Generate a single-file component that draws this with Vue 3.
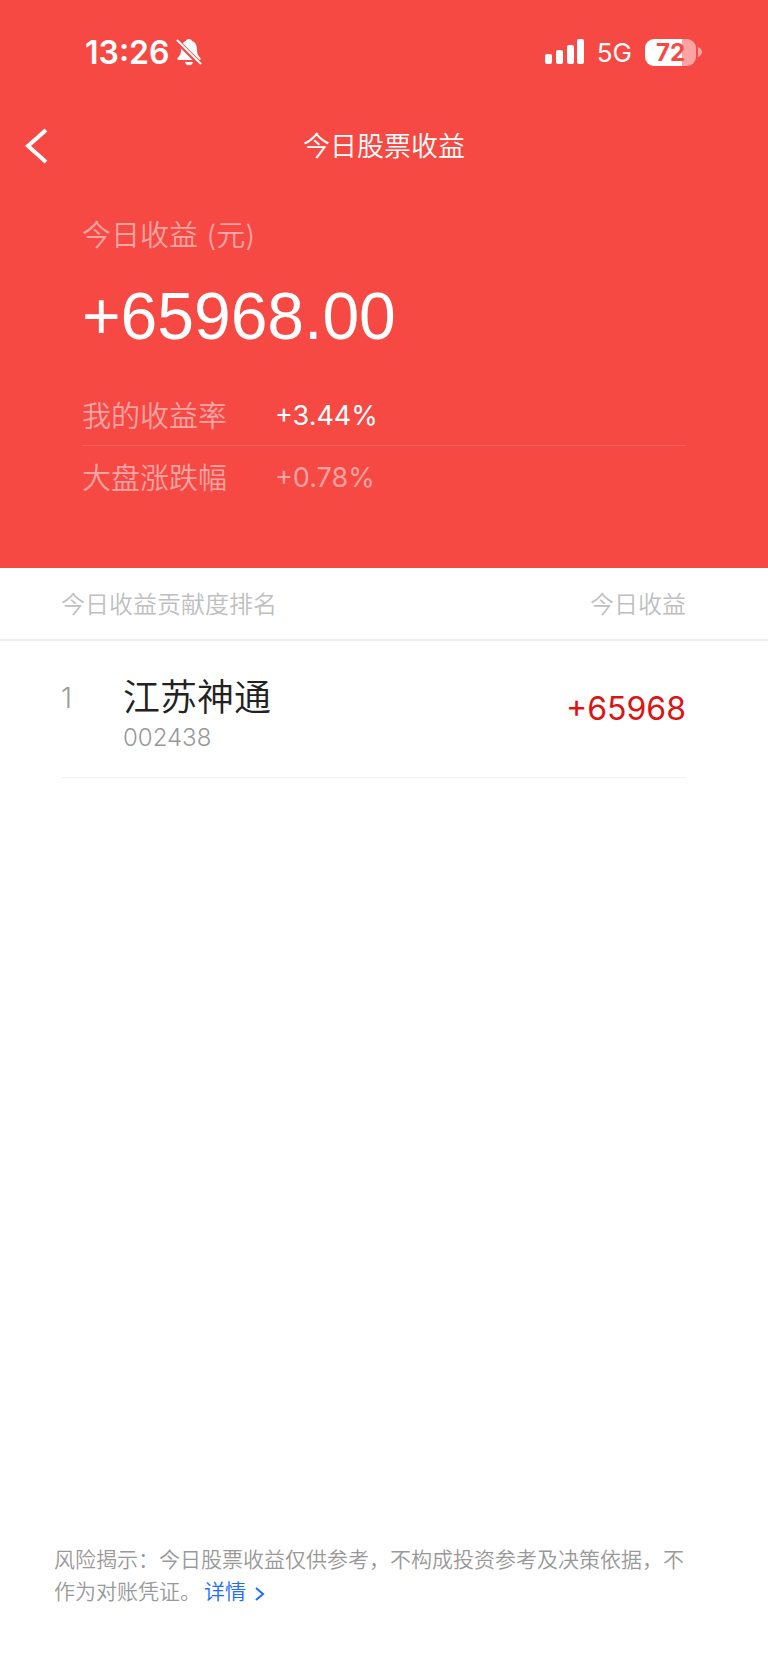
<template>
  <div class="page">
    <header class="summary">
      <div class="status-bar">
        <div class="status-left">
          <span class="time">13:26</span>
          <svg class="bell" viewBox="0 0 26 28" aria-hidden="true">
            <path
              d="M13 1c-1.700 0-2.600.8-3 2C6 4.300 5 8 5 12c0 4-1 5.500-3 7.500-1.200 1.200-.8 2.500.8 2.500h20.400c1.600 0 2-1.300.8-2.500-2-2-3-3.500-3-7.500 0-4-1-7.700-5-9-.4-1.200-1.300-2-3-2z"
            />
            <path d="M9 24h8c-.3 2-1.900 3.300-4 3.300S9.300 26 9 24z" />
            <path class="bell-gap" d="M0 2l25 25" />
            <path class="bell-slash" d="M1.500 2.500l23 23" />
          </svg>
        </div>
        <div class="status-right">
          <svg class="signal" viewBox="0 0 40 26" aria-hidden="true">
            <rect x="0" y="15" width="7" height="10" rx="2" />
            <rect x="11" y="11" width="7" height="14" rx="2" />
            <rect x="22" y="6" width="7" height="19" rx="2" />
            <rect x="32" y="0" width="7" height="25" rx="2" />
          </svg>
          <span class="network">5G</span>
          <div class="battery">
            <span class="battery-body">{{ battery }}</span>
            <svg class="battery-tip" viewBox="0 0 4 10" aria-hidden="true">
              <path d="M0 0c2.500 1 4 2.800 4 5s-1.500 4-4 5z" />
            </svg>
          </div>
        </div>
      </div>

      <nav class="nav-bar">
        <button class="back" type="button" aria-label="返回">
          <svg viewBox="0 0 24 36" aria-hidden="true">
            <path d="M21 2L3 18l18 16" />
          </svg>
        </button>
        <h1>今日股票收益</h1>
      </nav>

      <section class="profit">
        <p class="profit-label">今日收益 (元)</p>
        <p class="profit-total">+65968.00</p>
        <dl class="rates">
          <div v-for="rate in rates" :key="rate.label" class="rate">
            <dt>{{ rate.label }}</dt>
            <dd :class="{ muted: rate.muted }">{{ rate.value }}</dd>
          </div>
        </dl>
      </section>
    </header>

    <main>
      <table class="ranking">
        <thead>
          <tr>
            <th colspan="2" scope="col">今日收益贡献度排名</th>
            <th class="right" scope="col">今日收益</th>
          </tr>
        </thead>
        <tbody>
          <tr v-for="(stock, index) in stocks" :key="stock.code">
            <td class="rank"><div class="cell">{{ index + 1 }}</div></td>
            <td>
              <div class="cell">
                <div class="name">{{ stock.name }}</div>
                <div class="code">{{ stock.code }}</div>
              </div>
            </td>
            <td class="right"><div class="cell gain">{{ stock.gain }}</div></td>
          </tr>
        </tbody>
      </table>
    </main>

    <footer class="notice">
      风险揭示：今日股票收益仅供参考，不构成投资参考及决策依据，不作为对账凭证。<a href="#">详情<svg viewBox="0 0 10 16" aria-hidden="true"><path d="M1 2l7 6-7 6" /></svg></a>
    </footer>
  </div>
</template>

<script setup>
import { ref } from 'vue'

const battery = ref(72)

const rates = ref([
  { label: '我的收益率', value: '+3.44%', muted: false },
  { label: '大盘涨跌幅', value: '+0.78%', muted: true },
])

const stocks = ref([{ name: '江苏神通', code: '002438', gain: '+65968' }])
</script>

<style>
body {
  margin: 0;
  background: #fff;
}
</style>

<style scoped>
.page {
  display: flex;
  flex-direction: column;
  min-height: 100vh;
  font-family: Inter, 'Noto Sans CJK SC', sans-serif;
  font-weight: 350;
}

.summary {
  background: #f64944;
  color: #fff;
  padding-bottom: 61px;
}

.status-bar {
  display: flex;
  justify-content: space-between;
  align-items: center;
  height: 104px;
  padding: 0 66px 0 85px;
}

.status-left,
.status-right,
.battery {
  display: flex;
  align-items: center;
}

.status-left {
  gap: 6px;
}

.time {
  font-size: 32px;
  font-weight: 600;
}

.bell {
  width: 26px;
  height: 28px;
  fill: #fff;
}

.bell-gap {
  stroke: #f64944;
  stroke-width: 5;
}

.bell-slash {
  stroke: #fff;
  stroke-width: 2;
  stroke-linecap: round;
}

.signal {
  width: 40px;
  height: 26px;
  fill: #fff;
}

.network {
  margin: 0 13px 0 12px;
  font-size: 26px;
  font-weight: 400;
}

.battery {
  gap: 2px;
}

.battery-body {
  width: 51px;
  border-radius: 9px;
  background: linear-gradient(to right, #fff 72%, #fba4a2 72%);
  color: #f64944;
  font-size: 24px;
  font-weight: 700;
  line-height: 27px;
  text-align: center;
}

.battery-tip {
  width: 4px;
  height: 10px;
  fill: #fba4a2;
}

.nav-bar {
  display: grid;
  grid-template-columns: 72px 1fr 72px;
  align-items: center;
  height: 84px;
}

.back {
  display: flex;
  padding: 0 0 0 25px;
  border: 0;
  background: none;
}

.back svg {
  width: 24px;
  height: 36px;
  fill: none;
  stroke: #fff;
  stroke-width: 4;
}

h1 {
  margin: 0;
  padding-bottom: 4px;
  font-size: 27px;
  font-weight: 350;
  text-align: center;
}

.profit {
  padding: 28px 82px 0;
}

.profit-label,
.profit-total {
  margin: 0;
}

.profit-label {
  color: #fba4a2;
  font-size: 29px;
  line-height: 40px;
}

.profit-total {
  margin: 20px 0 28px;
  font-family: 'Liberation Sans', sans-serif;
  font-size: 66px;
  font-weight: 400;
  line-height: 80px;
}

.rates {
  margin: 0;
}

.rate {
  display: flex;
  align-items: center;
  height: 61px;
  font-size: 27px;
}

.rate + .rate {
  border-top: 1px solid #f8625e;
}

.rate dt {
  width: 193px;
  padding-bottom: 2px;
  color: #fba4a2;
  font-size: 29px;
}

.rate dd {
  margin: 0;
  padding-top: 2px;
  font-weight: 400;
}

.rate dd.muted {
  color: #fba4a2;
}

.ranking {
  width: 100%;
  border-collapse: collapse;
}

th {
  height: 69px;
  padding: 0 0 2px 61px;
  border-bottom: 2px solid #eee;
  color: #bfbfbf;
  font-size: 24px;
  font-weight: 350;
  text-align: left;
}

td {
  padding: 0;
}

th.right,
td.right {
  padding-left: 0;
  padding-right: 82px;
  text-align: right;
}

.rank {
  width: 62px;
  padding-left: 61px;
  color: #999;
  font-size: 28px;
}

.cell {
  box-sizing: border-box;
  height: 137px;
  padding-top: 32px;
  border-bottom: 1px solid #f2f2f2;
  line-height: 50px;
}

.name {
  color: #222;
  font-size: 37px;
  line-height: 50px;
}

.code {
  color: #999;
  font-size: 24px;
  line-height: 30px;
}

.gain {
  padding-top: 43px;
  color: #dc1414;
  font-size: 32px;
  font-weight: 400;
}

.notice {
  margin-top: auto;
  padding: 0 64px 57px 54px;
  color: #999;
  font-size: 21px;
  line-height: 32px;
}

.notice a {
  margin-left: 3px;
  color: #1a6dff;
  text-decoration: none;
}

.notice svg {
  width: 10px;
  height: 16px;
  margin-left: 9px;
  vertical-align: -3px;
  fill: none;
  stroke: #1a6dff;
  stroke-width: 2;
}
</style>
